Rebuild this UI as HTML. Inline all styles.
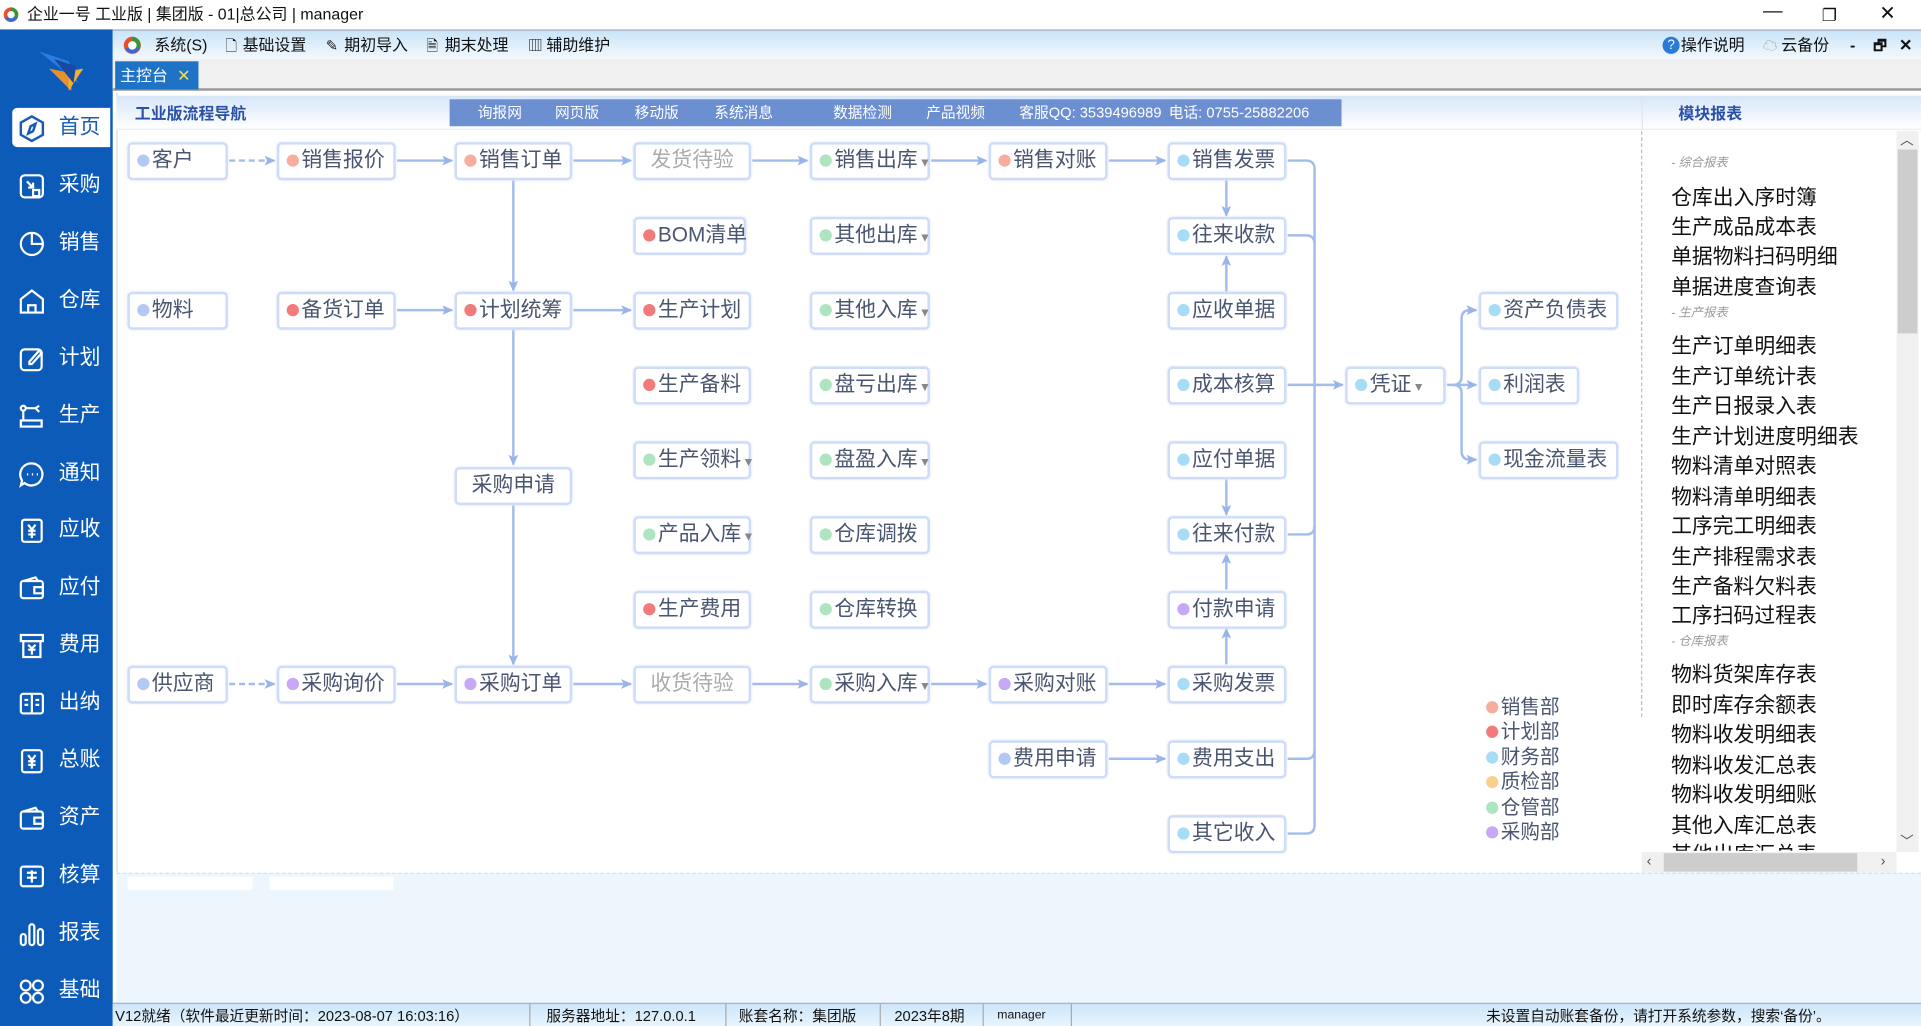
<!DOCTYPE html>
<html><head><meta charset="utf-8">
<style>
*{margin:0;padding:0;box-sizing:border-box}
html,body{width:1921px;height:1026px;overflow:hidden;background:#fff}
body{font-family:"Liberation Sans","Noto Sans CJK SC",sans-serif}
#w{position:absolute;left:0;top:0;width:1568px;height:837px;transform:scale(1.22513,1.22581);transform-origin:0 0;overflow:hidden;background:#fff}
.a{position:absolute}
.title{left:0;top:0;width:1568px;height:24px;background:#fff;font-size:13px;color:#111;line-height:24px}
.side{left:0;top:24px;width:92px;height:813px;background:#0d5bb8}
.si{position:absolute;left:10px;width:80px;height:32px;color:#fff;font-size:17px;line-height:32px}
.si span{position:absolute;left:38px}
.si svg{position:absolute;left:4px;top:5px}
.si.on{background:#fff;color:#1a5bb5;border-radius:4px 0 0 4px}
.menu{left:92px;top:24px;width:1476px;height:24px;background:linear-gradient(#c9e4f8,#f2f8fd);font-size:13px;color:#111;line-height:24px;border-top:1px solid #9ab}
.tabbar{left:92px;top:48px;width:1476px;height:26px;background:#f0f0f0;border-bottom:2px solid #999}
.tab{left:94px;top:50px;width:68px;height:23px;background:#1f73c6;color:#fff;font-size:13px;line-height:23px;padding-left:4px}
.panel{left:95px;top:76px;width:1473px;height:636px;background:#fff;border-left:1px solid #cdd}
.hdr{left:95px;top:78px;width:1473px;height:28px;background:linear-gradient(#d6e6f8,#fff);border-bottom:1px solid #e6eef8}
.strip{left:367px;top:81px;width:728px;height:22px;background:#6b8fd1;color:#fff;font-size:12px;line-height:22px}
.strip span{position:absolute}
.n{position:absolute;height:31px;border:2.5px solid #cfdcf8;border-radius:4px;background:#fff;font-size:17px;color:#4a5570;line-height:26px;padding-left:6px;white-space:nowrap;box-shadow:0 0 2px #e2eafb}
.n i{display:inline-block;width:10px;height:10px;border-radius:50%;margin-right:2px;vertical-align:0}
.n b{font-weight:normal;color:#888;font-size:10px;margin-left:1px}
.n.g{color:#aaa;text-align:center;padding-left:0}
.rl{position:absolute;left:1364px;font-size:17px;color:#111;white-space:nowrap}
.sec{position:absolute;left:1364px;font-size:10px;color:#999;font-style:italic;white-space:nowrap}
.lg{position:absolute;left:1213px;font-size:16px;color:#4a5570;line-height:20px;white-space:nowrap}
.lg i{display:inline-block;width:10px;height:10px;border-radius:50%;margin-right:2px}
.status{left:92px;top:818px;width:1476px;height:19px;background:linear-gradient(#cbe6fa,#e9f4fd);font-size:12px;color:#111;line-height:20px;border-top:1px solid #aac}
.status span{position:absolute;top:0;white-space:nowrap}
.sep{position:absolute;top:0;width:1px;height:19px;background:#aaa}
</style></head><body><div id="w">

<div class="a title">
<svg class="a" style="left:2px;top:5px" width="14" height="14"><circle cx="7" cy="7" r="6" fill="#e8502a"/><path d="M7 1a6 6 0 0 1 5 9L7 7z" fill="#2a9a3a"/><path d="M12 10A6 6 0 0 1 2 10L7 7z" fill="#3a6ad0"/><circle cx="7" cy="7" r="3" fill="#fff"/></svg>
<span class="a" style="left:22px">企业一号 工业版 | 集团版 - 01|总公司 | manager</span>
<span class="a" style="left:1439px;top:-2px;font-size:16px">—</span>
<span class="a" style="left:1487px;font-size:14px">❐</span>
<span class="a" style="left:1534px;font-size:16px">✕</span>
</div>

<div class="a side">
<svg class="a" style="left:26px;top:14px" width="44" height="40"><path d="M6 4 L30 12 L38 30 Z" fill="#2a7ee0"/><path d="M14 18 L34 22 L32 36 Z" fill="#e8902a"/><path d="M30 20 L42 18 L30 36Z" fill="#f0b030"/><path d="M18 10 L36 16 L34 30Z" fill="#1a4aa0"/></svg>
</div>
<div class="si on" style="top:88px"><svg width="24" height="24" viewBox="0 0 24 24" fill="none" stroke="#1a5bb5" stroke-width="2"><path d="M12 2l9 5v10l-9 5-9-5V7z"/><path d="M15 8l-2 6-4 2 2-6z"/></svg><span>首页</span></div>
<div class="si" style="top:135px"><svg width="24" height="24" viewBox="0 0 24 24" fill="none" stroke="#fff" stroke-width="1.8"><rect x="3" y="3" width="18" height="18" rx="3"/><path d="M8 8l5 5M13 9v4H9"/><rect x="13" y="15" width="5" height="5"/></svg><span>采购</span></div>
<div class="si" style="top:182px"><svg width="24" height="24" viewBox="0 0 24 24" fill="none" stroke="#fff" stroke-width="1.8"><circle cx="12" cy="12" r="9"/><path d="M12 3v9h9"/></svg><span>销售</span></div>
<div class="si" style="top:229px"><svg width="24" height="24" viewBox="0 0 24 24" fill="none" stroke="#fff" stroke-width="1.8"><path d="M3 10l9-7 9 7v11H3z"/><path d="M9 21v-6h6v6"/></svg><span>仓库</span></div>
<div class="si" style="top:276px"><svg width="24" height="24" viewBox="0 0 24 24" fill="none" stroke="#fff" stroke-width="1.8"><rect x="3" y="4" width="17" height="17" rx="3"/><path d="M10 14l8-9 2 2-8 9h-2z"/></svg><span>计划</span></div>
<div class="si" style="top:323px"><svg width="24" height="24" viewBox="0 0 24 24" fill="none" stroke="#fff" stroke-width="1.8"><circle cx="5" cy="5" r="2"/><path d="M7 5h8l3-2M15 5l3 3M5 7v8"/><rect x="3" y="15" width="17" height="5"/></svg><span>生产</span></div>
<div class="si" style="top:370px"><svg width="24" height="24" viewBox="0 0 24 24" fill="none" stroke="#fff" stroke-width="1.8"><path d="M12 3a9 9 0 1 1-6 16l-3 2 1-4A9 9 0 0 1 12 3z"/><path d="M8 12h1M12 12h1M16 12h1"/></svg><span>通知</span></div>
<div class="si" style="top:416px"><svg width="24" height="24" viewBox="0 0 24 24" fill="none" stroke="#fff" stroke-width="1.8"><rect x="4" y="3" width="16" height="18" rx="2"/><path d="M9 7l3 4 3-4M12 11v7M9 12h6M9 15h6"/></svg><span>应收</span></div>
<div class="si" style="top:463px"><svg width="24" height="24" viewBox="0 0 24 24" fill="none" stroke="#fff" stroke-width="1.8"><rect x="3" y="6" width="18" height="14" rx="2"/><path d="M5 6l10-3 2 3M14 11h7v5h-7z"/></svg><span>应付</span></div>
<div class="si" style="top:510px"><svg width="24" height="24" viewBox="0 0 24 24" fill="none" stroke="#fff" stroke-width="1.8"><rect x="3" y="3" width="18" height="5"/><rect x="5" y="8" width="14" height="13"/><path d="M9 11l3 3 3-3M12 14v5M9 15h6"/></svg><span>费用</span></div>
<div class="si" style="top:557px"><svg width="24" height="24" viewBox="0 0 24 24" fill="none" stroke="#fff" stroke-width="1.8"><rect x="3" y="4" width="18" height="16" rx="2"/><path d="M12 4v16M6 9h3M6 13h3M15 9h3M15 13h3"/></svg><span>出纳</span></div>
<div class="si" style="top:604px"><svg width="24" height="24" viewBox="0 0 24 24" fill="none" stroke="#fff" stroke-width="1.8"><rect x="4" y="3" width="16" height="18" rx="2"/><path d="M9 7l3 4 3-4M12 11v7M9 12h6M9 15h6"/></svg><span>总账</span></div>
<div class="si" style="top:651px"><svg width="24" height="24" viewBox="0 0 24 24" fill="none" stroke="#fff" stroke-width="1.8"><rect x="3" y="6" width="18" height="14" rx="2"/><path d="M5 6l10-3 2 3M14 11h7v5h-7z"/></svg><span>资产</span></div>
<div class="si" style="top:698px"><svg width="24" height="24" viewBox="0 0 24 24" fill="none" stroke="#fff" stroke-width="1.8"><rect x="3" y="4" width="18" height="16" rx="2"/><path d="M8 9h8M8 13h8M12 7v10"/></svg><span>核算</span></div>
<div class="si" style="top:745px"><svg width="24" height="24" viewBox="0 0 24 24" fill="none" stroke="#fff" stroke-width="1.8"><rect x="3" y="12" width="4" height="9" rx="2"/><rect x="10" y="4" width="4" height="17" rx="2"/><rect x="17" y="8" width="4" height="13" rx="2"/></svg><span>报表</span></div>
<div class="si" style="top:792px"><svg width="24" height="24" viewBox="0 0 24 24" fill="none" stroke="#fff" stroke-width="1.8"><circle cx="7" cy="7" r="4"/><circle cx="17" cy="7" r="4"/><circle cx="7" cy="17" r="4"/><circle cx="17" cy="17" r="4"/></svg><span>基础</span></div>

<div class="a menu">
<svg class="a" style="left:8px;top:4px" width="16" height="16"><circle cx="8" cy="8" r="7" fill="#e8502a"/><path d="M8 1a7 7 0 0 1 6 10L8 8z" fill="#2a9a3a"/><path d="M14 11A7 7 0 0 1 2 11L8 8z" fill="#3a6ad0"/><circle cx="8" cy="8" r="3.5" fill="#fff"/></svg>
<span class="a" style="left:34px">系统(S)</span>
<span class="a" style="left:92px;font-size:12px">🗋</span><span class="a" style="left:106px">基础设置</span>
<span class="a" style="left:174px;font-size:12px">✎</span><span class="a" style="left:189px">期初导入</span>
<span class="a" style="left:256px;font-size:12px">🗎</span><span class="a" style="left:271px">期末处理</span>
<span class="a" style="left:339px;font-size:12px">▥</span><span class="a" style="left:354px">辅助维护</span>
<span class="a" style="left:1265px;color:#fff;background:#2a7ad8;border-radius:50%;width:14px;height:14px;top:5px;line-height:14px;text-align:center;font-size:11px">?</span><span class="a" style="left:1280px">操作说明</span>
<span class="a" style="left:1347px;color:#999;font-size:12px">☁</span><span class="a" style="left:1362px">云备份</span>
<span class="a" style="left:1418px;font-weight:bold">-</span>
<span class="a" style="left:1437px;font-weight:bold;font-size:12px">🗗</span>
<span class="a" style="left:1458px;font-weight:bold">✕</span>
</div>
<div class="a tabbar"></div>
<div class="a tab">主控台 <span style="color:#f5e04a;margin-left:4px">✕</span></div>

<div class="a panel"></div>
<div class="a hdr"></div>
<div class="a" style="left:110px;top:82px;font-size:13px;font-weight:bold;color:#2a50a8">工业版流程导航</div>
<div class="a strip">
<span style="left:23px">询报网</span><span style="left:86px">网页版</span><span style="left:151px">移动版</span><span style="left:216px">系统消息</span><span style="left:313px">数据检测</span><span style="left:389px">产品视频</span><span style="left:465px">客服QQ: 3539496989</span><span style="left:587px">电话: 0755-25882206</span>
</div>
<div class="a" style="left:1340px;top:78px;width:1px;height:28px;background:#dde6f2"></div>
<div class="a" style="left:1370px;top:82px;font-size:13px;font-weight:bold;color:#2a50a8">模块报表</div>

<svg class="a" style="left:0;top:0" width="1568" height="837">
<defs><marker id="ar" markerWidth="10" markerHeight="10" refX="8" refY="4" orient="auto" markerUnits="userSpaceOnUse"><path d="M0 0L9 4L0 8L2 4z" fill="#98b4ea"/></marker></defs>
<g stroke="#a2bcec" stroke-width="2" fill="none">
<path d="M187 131H224" stroke-dasharray="5 3" marker-end="url(#ar)"/>
<path d="M324 131H369" marker-end="url(#ar)"/>
<path d="M468 131H515" marker-end="url(#ar)"/>
<path d="M614 131H659" marker-end="url(#ar)"/>
<path d="M760 131H805" marker-end="url(#ar)"/>
<path d="M905 131H951" marker-end="url(#ar)"/>
<path d="M187 558H224" stroke-dasharray="5 3" marker-end="url(#ar)"/>
<path d="M324 558H369" marker-end="url(#ar)"/>
<path d="M468 558H515" marker-end="url(#ar)"/>
<path d="M614 558H659" marker-end="url(#ar)"/>
<path d="M760 558H805" marker-end="url(#ar)"/>
<path d="M905 558H951" marker-end="url(#ar)"/>
<path d="M905 619H951" marker-end="url(#ar)"/>
<path d="M324 253H369" marker-end="url(#ar)"/>
<path d="M468 253H515" marker-end="url(#ar)"/>
<path d="M419 147V237" marker-end="url(#ar)"/>
<path d="M419 269V379" marker-end="url(#ar)"/>
<path d="M419 412V542" marker-end="url(#ar)"/>
<path d="M1001 147V176" marker-end="url(#ar)"/>
<path d="M1001 238V209" marker-end="url(#ar)"/>
<path d="M1001 391V420" marker-end="url(#ar)"/>
<path d="M1001 481V452" marker-end="url(#ar)"/>
<path d="M1001 542V513" marker-end="url(#ar)"/>
<path d="M1051 131H1066Q1073 131 1073 138V673Q1073 680 1066 680H1051"/>
<path d="M1051 192H1066Q1073 192 1073 199"/>
<path d="M1051 436H1066Q1073 436 1073 429"/>
<path d="M1051 619H1066Q1073 619 1073 612"/>
<path d="M1051 314H1096" marker-end="url(#ar)"/>
<path d="M1181 314H1205" marker-end="url(#ar)"/>
<path d="M1186 314Q1193 314 1193 307V260Q1193 253 1200 253H1205" marker-end="url(#ar)"/>
<path d="M1186 314Q1193 314 1193 321V368Q1193 375 1200 375H1205" marker-end="url(#ar)"/>
</g>
<path d="M1340 107V585" stroke="#bbb" stroke-dasharray="3 2"/>
</svg>

<div class="n" style="left:104px;top:116px;width:82px"><i style="background:#b3c8f2"></i>客户</div>
<div class="n" style="left:226px;top:116px;width:97px"><i style="background:#f6ad9e"></i>销售报价</div>
<div class="n" style="left:371px;top:116px;width:96px"><i style="background:#f6ad9e"></i>销售订单</div>
<div class="n g" style="left:517px;top:116px;width:96px">发货待验</div>
<div class="n" style="left:661px;top:116px;width:98px"><i style="background:#aee4c0"></i>销售出库<b>▼</b></div>
<div class="n" style="left:807px;top:116px;width:97px"><i style="background:#f6ad9e"></i>销售对账</div>
<div class="n" style="left:953px;top:116px;width:97px"><i style="background:#a6dcf6"></i>销售发票</div>

<div class="n" style="left:517px;top:177px;width:92px"><i style="background:#f27a7a"></i>BOM清单</div>
<div class="n" style="left:661px;top:177px;width:98px"><i style="background:#aee4c0"></i>其他出库<b>▼</b></div>
<div class="n" style="left:953px;top:177px;width:97px"><i style="background:#a6dcf6"></i>往来收款</div>

<div class="n" style="left:104px;top:238px;width:82px"><i style="background:#b3c8f2"></i>物料</div>
<div class="n" style="left:226px;top:238px;width:97px"><i style="background:#f27a7a"></i>备货订单</div>
<div class="n" style="left:371px;top:238px;width:96px"><i style="background:#f27a7a"></i>计划统筹</div>
<div class="n" style="left:517px;top:238px;width:96px"><i style="background:#f27a7a"></i>生产计划</div>
<div class="n" style="left:661px;top:238px;width:98px"><i style="background:#aee4c0"></i>其他入库<b>▼</b></div>
<div class="n" style="left:953px;top:238px;width:97px"><i style="background:#a6dcf6"></i>应收单据</div>
<div class="n" style="left:1207px;top:238px;width:114px"><i style="background:#a6dcf6"></i>资产负债表</div>

<div class="n" style="left:517px;top:299px;width:96px"><i style="background:#f27a7a"></i>生产备料</div>
<div class="n" style="left:661px;top:299px;width:98px"><i style="background:#aee4c0"></i>盘亏出库<b>▼</b></div>
<div class="n" style="left:953px;top:299px;width:97px"><i style="background:#a6dcf6"></i>成本核算</div>
<div class="n" style="left:1098px;top:299px;width:82px"><i style="background:#a6dcf6"></i>凭证<b>▼</b></div>
<div class="n" style="left:1207px;top:299px;width:82px"><i style="background:#a6dcf6"></i>利润表</div>

<div class="n" style="left:517px;top:360px;width:96px"><i style="background:#aee4c0"></i>生产领料<b>▼</b></div>
<div class="n" style="left:661px;top:360px;width:98px"><i style="background:#aee4c0"></i>盘盈入库<b>▼</b></div>
<div class="n" style="left:953px;top:360px;width:97px"><i style="background:#a6dcf6"></i>应付单据</div>
<div class="n" style="left:1207px;top:360px;width:114px"><i style="background:#a6dcf6"></i>现金流量表</div>

<div class="n g" style="left:371px;top:381px;width:96px;color:#4a5570">采购申请</div>

<div class="n" style="left:517px;top:421px;width:96px"><i style="background:#aee4c0"></i>产品入库<b>▼</b></div>
<div class="n" style="left:661px;top:421px;width:98px"><i style="background:#aee4c0"></i>仓库调拨</div>
<div class="n" style="left:953px;top:421px;width:97px"><i style="background:#a6dcf6"></i>往来付款</div>

<div class="n" style="left:517px;top:482px;width:96px"><i style="background:#f27a7a"></i>生产费用</div>
<div class="n" style="left:661px;top:482px;width:98px"><i style="background:#aee4c0"></i>仓库转换</div>
<div class="n" style="left:953px;top:482px;width:97px"><i style="background:#c7a8f6"></i>付款申请</div>

<div class="n" style="left:104px;top:543px;width:82px"><i style="background:#b3c8f2"></i>供应商</div>
<div class="n" style="left:226px;top:543px;width:97px"><i style="background:#c7a8f6"></i>采购询价</div>
<div class="n" style="left:371px;top:543px;width:96px"><i style="background:#c7a8f6"></i>采购订单</div>
<div class="n g" style="left:517px;top:543px;width:96px">收货待验</div>
<div class="n" style="left:661px;top:543px;width:98px"><i style="background:#aee4c0"></i>采购入库<b>▼</b></div>
<div class="n" style="left:807px;top:543px;width:97px"><i style="background:#c7a8f6"></i>采购对账</div>
<div class="n" style="left:953px;top:543px;width:97px"><i style="background:#a6dcf6"></i>采购发票</div>

<div class="n" style="left:807px;top:604px;width:97px"><i style="background:#b3c8f2"></i>费用申请</div>
<div class="n" style="left:953px;top:604px;width:97px"><i style="background:#a6dcf6"></i>费用支出</div>
<div class="n" style="left:953px;top:665px;width:97px"><i style="background:#a6dcf6"></i>其它收入</div>

<div class="lg" style="top:568px"><i style="background:#f6ad9e"></i>销售部</div>
<div class="lg" style="top:588px"><i style="background:#f27a7a"></i>计划部</div>
<div class="lg" style="top:609px"><i style="background:#a6dcf6"></i>财务部</div>
<div class="lg" style="top:629px"><i style="background:#f8d08e"></i>质检部</div>
<div class="lg" style="top:650px"><i style="background:#aee4c0"></i>仓管部</div>
<div class="lg" style="top:670px"><i style="background:#c7a8f6"></i>采购部</div>

<div class="a" style="left:1341px;top:107px;width:207px;height:587px;overflow:hidden">
<div style="position:absolute;left:-1341px;top:-107px;width:1600px;height:800px">
<div class="sec" style="top:124px">- 综合报表</div>
<div class="rl" style="top:147px">仓库出入序时簿</div>
<div class="rl" style="top:171px">生产成品成本表</div>
<div class="rl" style="top:195px">单据物料扫码明细</div>
<div class="rl" style="top:220px">单据进度查询表</div>
<div class="sec" style="top:246px">- 生产报表</div>
<div class="rl" style="top:268px">生产订单明细表</div>
<div class="rl" style="top:293px">生产订单统计表</div>
<div class="rl" style="top:317px">生产日报录入表</div>
<div class="rl" style="top:342px">生产计划进度明细表</div>
<div class="rl" style="top:366px">物料清单对照表</div>
<div class="rl" style="top:391px">物料清单明细表</div>
<div class="rl" style="top:415px">工序完工明细表</div>
<div class="rl" style="top:440px">生产排程需求表</div>
<div class="rl" style="top:464px">生产备料欠料表</div>
<div class="rl" style="top:488px">工序扫码过程表</div>
<div class="sec" style="top:514px">- 仓库报表</div>
<div class="rl" style="top:536px">物料货架库存表</div>
<div class="rl" style="top:561px">即时库存余额表</div>
<div class="rl" style="top:585px">物料收发明细表</div>
<div class="rl" style="top:610px">物料收发汇总表</div>
<div class="rl" style="top:634px">物料收发明细账</div>
<div class="rl" style="top:659px">其他入库汇总表</div>
<div class="rl" style="top:683px">其他出库汇总表</div>
</div></div>
<div class="a" style="left:1548px;top:107px;width:18px;height:588px;background:#f0f0f0"></div>
<div class="a" style="left:1549px;top:122px;width:16px;height:150px;background:#cdcdcd"></div>
<div class="a" style="left:1551px;top:106px;font-size:11px;color:#555">︿</div>
<div class="a" style="left:1551px;top:678px;font-size:11px;color:#555">﹀</div>
<div class="a" style="left:1340px;top:695px;width:208px;height:17px;background:#f0f0f0"></div>
<div class="a" style="left:1358px;top:696px;width:158px;height:15px;background:#cdcdcd"></div>
<div class="a" style="left:1344px;top:695px;font-size:12px;color:#555">‹</div>
<div class="a" style="left:1535px;top:695px;font-size:12px;color:#555">›</div>

<div class="a" style="left:95px;top:712px;width:1473px;height:106px;background:#eef6fd;border-top:1px dashed #dde"></div>
<div class="a" style="left:104px;top:715px;width:102px;height:11px;background:#fff"></div>
<div class="a" style="left:220px;top:715px;width:101px;height:11px;background:#fff"></div>

<div class="a status">
<span style="left:2px">V12就绪（软件最近更新时间：2023-08-07 16:03:16）</span>
<div class="sep" style="left:340px"></div>
<span style="left:354px">服务器地址：127.0.0.1</span>
<div class="sep" style="left:500px"></div>
<span style="left:511px">账套名称：集团版</span>
<div class="sep" style="left:626px"></div>
<span style="left:638px">2023年8期</span>
<div class="sep" style="left:710px"></div>
<span style="left:722px;font-size:10px">manager</span>
<div class="sep" style="left:782px"></div>
<span style="left:1121px">未设置自动账套备份，请打开系统参数，搜索‘备份’。</span>
</div>

</div></body></html>
